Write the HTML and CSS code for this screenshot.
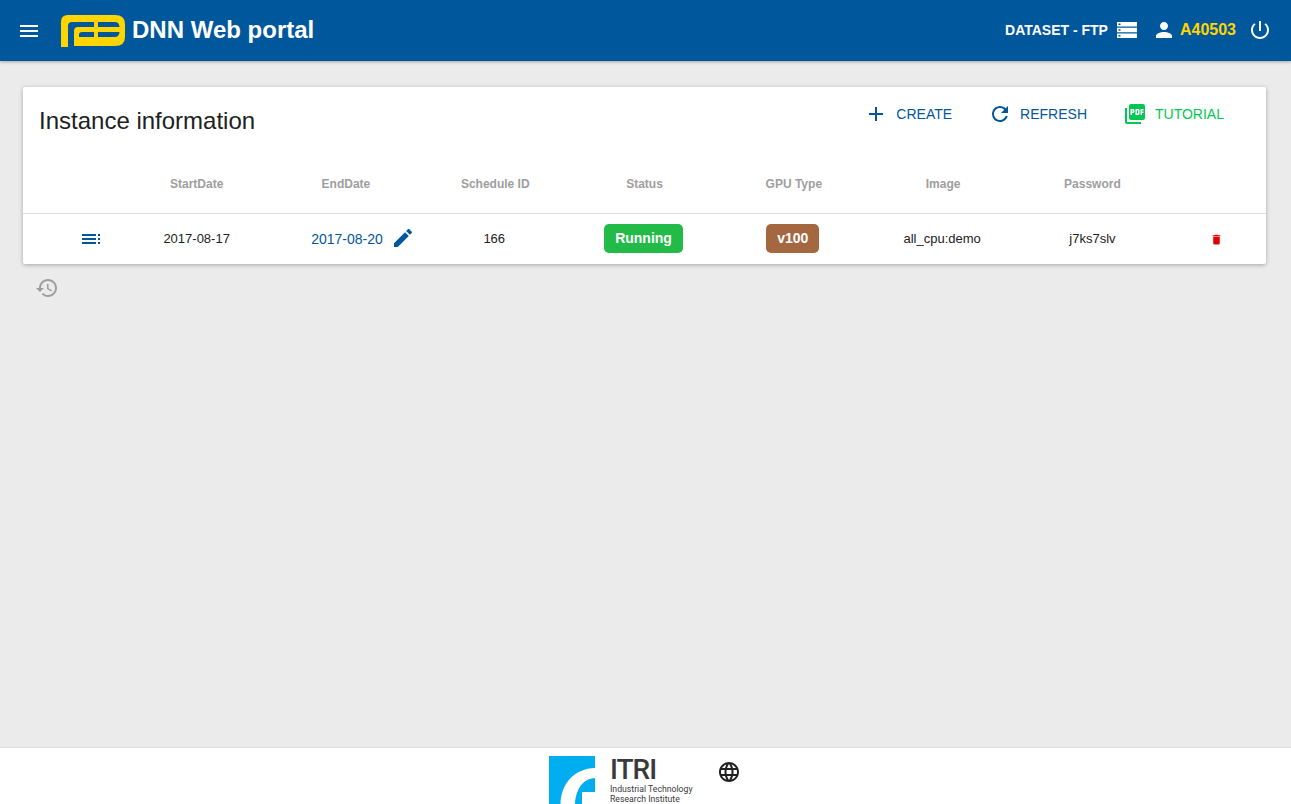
FILE: index.html
```html
<!DOCTYPE html>
<html lang="en">
<head>
<meta charset="utf-8">
<title>DNN Web portal</title>
<link rel="stylesheet" href="styles.css">
</head>
<body>
<header class="topbar">
  <svg class="menu-icon" viewBox="0 0 24 24"><path d="M3 18h18v-2H3v2zm0-5h18v-2H3v2zm0-7v2h18V6H3z"/></svg>
  <svg class="logo" viewBox="0 0 64 32"><path fill="#ffd500" fill-rule="evenodd" d="M0 32V7Q0 0 7 0H54Q64 0 64 9V22Q64 31 54 31H13V16Q13 12 17 12H33V7H11Q7 7 7 11V32ZM37 7H54Q58 7 58.5 12H37ZM18 22V20Q18 17 21 17H33V22ZM37 17H58.5Q58 22 54 22H37Z"/></svg>
  <span class="brand">DNN Web portal</span>
  <div class="topbar-right">
    <span class="dataset">DATASET - FTP</span>
    <svg class="storage-icon" viewBox="0 0 20 16"><path fill="#fff" fill-rule="evenodd" d="M0 0H20V4.4H0ZM1.5 1.4V3H3.5V1.4ZM0 5.8H20V10.2H0ZM1.5 7.2V8.8H3.5V7.2ZM0 11.6H20V16H0ZM1.5 13V14.6H3.5V13Z"/></svg>
    <svg class="person-icon" viewBox="0 0 24 24"><path d="M12 12c2.21 0 4-1.79 4-4s-1.79-4-4-4-4 1.79-4 4 1.79 4 4 4zm0 2c-2.67 0-8 1.34-8 4v2h16v-2c0-2.66-5.33-4-8-4z"/></svg>
    <span class="user">A40503</span>
    <svg class="power-icon" viewBox="0 0 24 24"><path d="M13 3h-2v10h2V3zm4.83 2.17l-1.42 1.42C17.99 7.86 19 9.81 19 12c0 3.87-3.13 7-7 7s-7-3.13-7-7c0-2.19 1.01-4.14 2.58-5.42L6.17 5.17C4.23 6.82 3 9.26 3 12c0 4.97 4.03 9 9 9s9-4.03 9-9c0-2.74-1.23-5.18-3.17-6.83z"/></svg>
  </div>
</header>

<main class="content">
  <section class="card">
    <div class="card-head">
      <h1 class="card-title">Instance information</h1>
      <div class="actions">
        <a class="action action-blue"><svg class="action-icon" viewBox="0 0 24 24"><path d="M19 13h-6v6h-2v-6H5v-2h6V5h2v6h6v2z"/></svg>CREATE</a>
        <a class="action action-blue"><svg class="action-icon" viewBox="0 0 24 24"><path d="M17.65 6.35C16.2 4.9 14.21 4 12 4c-4.42 0-7.99 3.58-7.99 8s3.57 8 7.99 8c3.73 0 6.84-2.55 7.73-6h-2.08c-.82 2.33-3.04 4-5.65 4-3.31 0-6-2.69-6-6s2.69-6 6-6c1.66 0 3.14.69 4.22 1.78L13 11h7V4l-2.35 2.35z"/></svg>REFRESH</a>
        <a class="action action-green"><svg class="action-icon" viewBox="0 0 24 24"><path d="M20 2H8c-1.1 0-2 .9-2 2v12c0 1.1.9 2 2 2h12c1.1 0 2-.9 2-2V4c0-1.1-.9-2-2-2zM11.5 9.5c0 .83-.67 1.5-1.5 1.5H9v2H7.5V7H10c.83 0 1.5.67 1.5 1.5v1zm5 2c0 .83-.67 1.5-1.5 1.5h-2.5V7H15c.83 0 1.5.67 1.5 1.5v3zm4-3H19v1h1.5V11H19v2h-1.5V7h3v1.5zM9 9.5h1v-1H9v1zM4 6H2v14c0 1.1.9 2 2 2h14v-2H4V6zm10 5.5h1v-3h-1v3z"/></svg>TUTORIAL</a>
      </div>
    </div>
    <table class="table">
      <thead>
        <tr>
          <th class="col-first"></th>
          <th class="col">StartDate</th>
          <th class="col">EndDate</th>
          <th class="col">Schedule ID</th>
          <th class="col">Status</th>
          <th class="col">GPU Type</th>
          <th class="col">Image</th>
          <th class="col">Password</th>
          <th class="col-last"></th>
        </tr>
      </thead>
      <tbody>
        <tr>
          <td class="cell-menu"><svg class="list-icon" viewBox="0 0 18 10"><path d="M0 0H14V2H0ZM0 4H14V6H0ZM0 8H14V10H0ZM16 0H18V2H16ZM16 4H18V6H16ZM16 8H18V10H16Z"/></svg></td>
          <td class="cell-nudge">2017-08-17</td>
          <td class="cell-end"><span class="end-date">2017-08-20</span><svg class="edit-icon" viewBox="0 0 24 24"><path d="M3 17.25V21h3.75L17.81 9.94l-3.75-3.75L3 17.25zM20.71 7.04c.39-.39.39-1.02 0-1.41l-2.34-2.34c-.39-.39-1.02-.39-1.41 0l-1.83 1.83 3.75 3.75 1.83-1.83z"/></svg></td>
          <td>166</td>
          <td><span class="badge badge-green">Running</span></td>
          <td><span class="badge badge-brown">v100</span></td>
          <td>all_cpu:demo</td>
          <td class="cell-nudge">j7ks7slv</td>
          <td><svg class="trash-icon" viewBox="0 0 24 24"><path d="M6 19c0 1.1.9 2 2 2h8c1.1 0 2-.9 2-2V7H6v12zM19 4h-3.5l-1-1h-5l-1 1H5v2h14V4z"/></svg></td>
        </tr>
      </tbody>
    </table>
  </section>
  <svg class="history-icon" viewBox="0 0 24 24"><path d="M13 3c-4.97 0-9 4.03-9 9H1l3.89 3.89.07.14L9 12H6c0-3.87 3.13-7 7-7s7 3.13 7 7-3.13 7-7 7c-1.93 0-3.68-.79-4.94-2.06l-1.42 1.42C8.27 19.99 10.51 21 13 21c4.97 0 9-4.03 9-9s-4.03-9-9-9zm-1 5v5l4.28 2.54.72-1.21-3.5-2.08V8H12z"/></svg>
</main>

<footer class="footer">
  <div class="itri">
    <svg class="itri-mark" viewBox="0 0 46 48"><rect width="46" height="48" fill="#00aeef"/><path fill="#fff" d="M11.5 48C12 27 26 12.500 46 12V22C34 22.500 27 33 26 48Z"/><path fill="#fff" d="M33 48V36H46V48Z"/></svg>
    <div class="itri-text">
      <span class="itri-name">ITRI</span>
      <span class="itri-sub">Industrial Technology</span>
      <span class="itri-sub">Research Institute</span>
    </div>
  </div>
  <svg class="globe-icon" viewBox="0 0 24 24"><path d="M11.99 2C6.47 2 2 6.48 2 12s4.47 10 9.99 10C17.52 22 22 17.52 22 12S17.52 2 11.99 2zm6.93 6h-2.95c-.32-1.25-.78-2.45-1.38-3.56 1.84.63 3.37 1.91 4.33 3.56zM12 4.040c.83 1.2 1.48 2.53 1.91 3.96h-3.82c.43-1.43 1.08-2.76 1.91-3.96zM4.26 14C4.1 13.36 4 12.69 4 12s.1-1.36.26-2h3.38c-.08.66-.14 1.32-.14 2 0 .68.06 1.34.14 2H4.26zm.82 2h2.95c.32 1.25.78 2.45 1.38 3.56-1.84-.63-3.37-1.9-4.33-3.56zm2.95-8H5.08c.96-1.66 2.49-2.93 4.33-3.56C8.81 5.55 8.35 6.75 8.03 8zM12 19.96c-.83-1.2-1.48-2.53-1.91-3.96h3.82c-.43 1.43-1.08 2.76-1.91 3.96zM14.34 14H9.66c-.09-.66-.16-1.32-.16-2 0-.68.07-1.35.16-2h4.68c.09.65.16 1.32.16 2 0 .68-.07 1.34-.16 2zm.25 5.56c.6-1.11 1.06-2.31 1.38-3.56h2.95c-.96 1.65-2.49 2.93-4.33 3.56zM16.36 14c.08-.66.14-1.32.14-2 0-.68-.06-1.34-.14-2h3.38c.16.64.26 1.31.26 2s-.1 1.36-.26 2h-3.38z"/></svg>
</footer>
</body>
</html>
```
FILE: styles.css
```css
* { box-sizing: border-box; }
html, body { height: 100%; }
body {
  margin: 0;
  height: 804px;
  overflow: hidden;
  display: flex;
  flex-direction: column;
  background: #ebebeb;
  font-family: "Liberation Sans", Arial, sans-serif;
  color: #212121;
}
.topbar {
  flex: none;
  height: 61px;
  display: flex;
  align-items: center;
  padding: 0 19px 0 17px;
  background: #01579b;
  box-shadow: 0 1px 3px rgba(0,0,0,.3);
  color: #fff;
}
.menu-icon { width: 24px; height: 24px; fill: #fff; }
.logo { width: 64px; height: 32px; margin-left: 20px; }
.brand { margin-left: 7px; font-size: 24px; font-weight: 700; padding-bottom: 2px; }
.topbar-right { margin-left: auto; display: flex; align-items: center; padding-bottom: 2px; }
.dataset { font-size: 14px; font-weight: 700; }
.storage-icon { width: 20px; height: 16px; margin-left: 9px; }
.person-icon { width: 24px; height: 24px; fill: #fff; margin-left: 15px; }
.user { color: #ffd500; font-size: 16px; font-weight: 700; margin-left: 4px; }
.power-icon { width: 24px; height: 24px; fill: #fff; margin-left: 12px; }

.content { flex: 1; padding: 26px 25px 0 23px; }
.card {
  height: 177px;
  background: #fff;
  box-shadow: 0 1px 4px rgba(0,0,0,.3);
  border-radius: 2px;
}
.card-head {
  height: 68px;
  display: flex;
  justify-content: space-between;
  align-items: center;
  padding: 0 26px 0 16px;
}
.card-title { margin: 0; font-size: 24px; font-weight: 400; }
.actions { display: flex; gap: 4px; margin-bottom: 14px; }
.action { display: flex; align-items: center; gap: 8px; height: 36px; padding: 0 16px; font-size: 14px; }
.action-blue { color: #01579b; }
.action-green { color: #00c853; }
.action-icon { width: 24px; height: 24px; fill: currentColor; }

.table { width: 100%; border-collapse: collapse; table-layout: fixed; font-size: 13px; }
.table th { height: 58px; padding: 0 0 0 2px; font-size: 12px; font-weight: 700; color: #9e9e9e; text-align: center; border-bottom: 1px solid #ddd; }
.col-first { width: 98px; }
.col { width: 149.3px; }
.col-last { width: 100px; }
.table td { height: 50px; padding: 0; text-align: center; }
.table .cell-menu { padding-left: 37px; }
.table .cell-nudge { padding-left: 2px; }
.list-icon { display: block; width: 18px; height: 10px; margin: 2px auto 0; fill: #01579b; }
.cell-end { color: #01579b; }
.end-date { font-size: 14px; position: relative; top: 2px; margin-left: 36px; }
.edit-icon { width: 24px; height: 24px; fill: #01579b; vertical-align: middle; margin-left: 8px; }
.badge { display: inline-block; height: 29px; line-height: 28px; border-radius: 5px; color: #fff; font-weight: 700; font-size: 14px; }
.badge-green { width: 79px; background: #22bb48; }
.badge-brown { width: 53px; background: #a5673f; }
.trash-icon { display: block; width: 13px; height: 13px; margin: 2px auto 0; fill: #e00000; }
.history-icon { display: block; width: 24px; height: 24px; margin: 12px 0 0 12px; fill: #9e9e9e; }

.footer {
  flex: none;
  height: 57px;
  display: flex;
  align-items: flex-start;
  justify-content: center;
  background: #fff;
  border-top: 1px solid #ddd;
  overflow: hidden;
}
.itri { display: flex; margin-top: 8px; margin-left: -1px; }
.itri-mark { width: 46px; height: 48px; }
.itri-text { display: flex; flex-direction: column; width: 82px; margin-left: 15px; color: #3a3a3a; font-family: Roboto, sans-serif; }
.itri-name { font-size: 28px; font-weight: 500; line-height: 27px; height: 28px; letter-spacing: -1px; }
.itri-sub { font-size: 8.700px; line-height: 10px; white-space: nowrap; }
.globe-icon { width: 24px; height: 24px; margin: 12px 0 0 25px; fill: #212121; }
```
